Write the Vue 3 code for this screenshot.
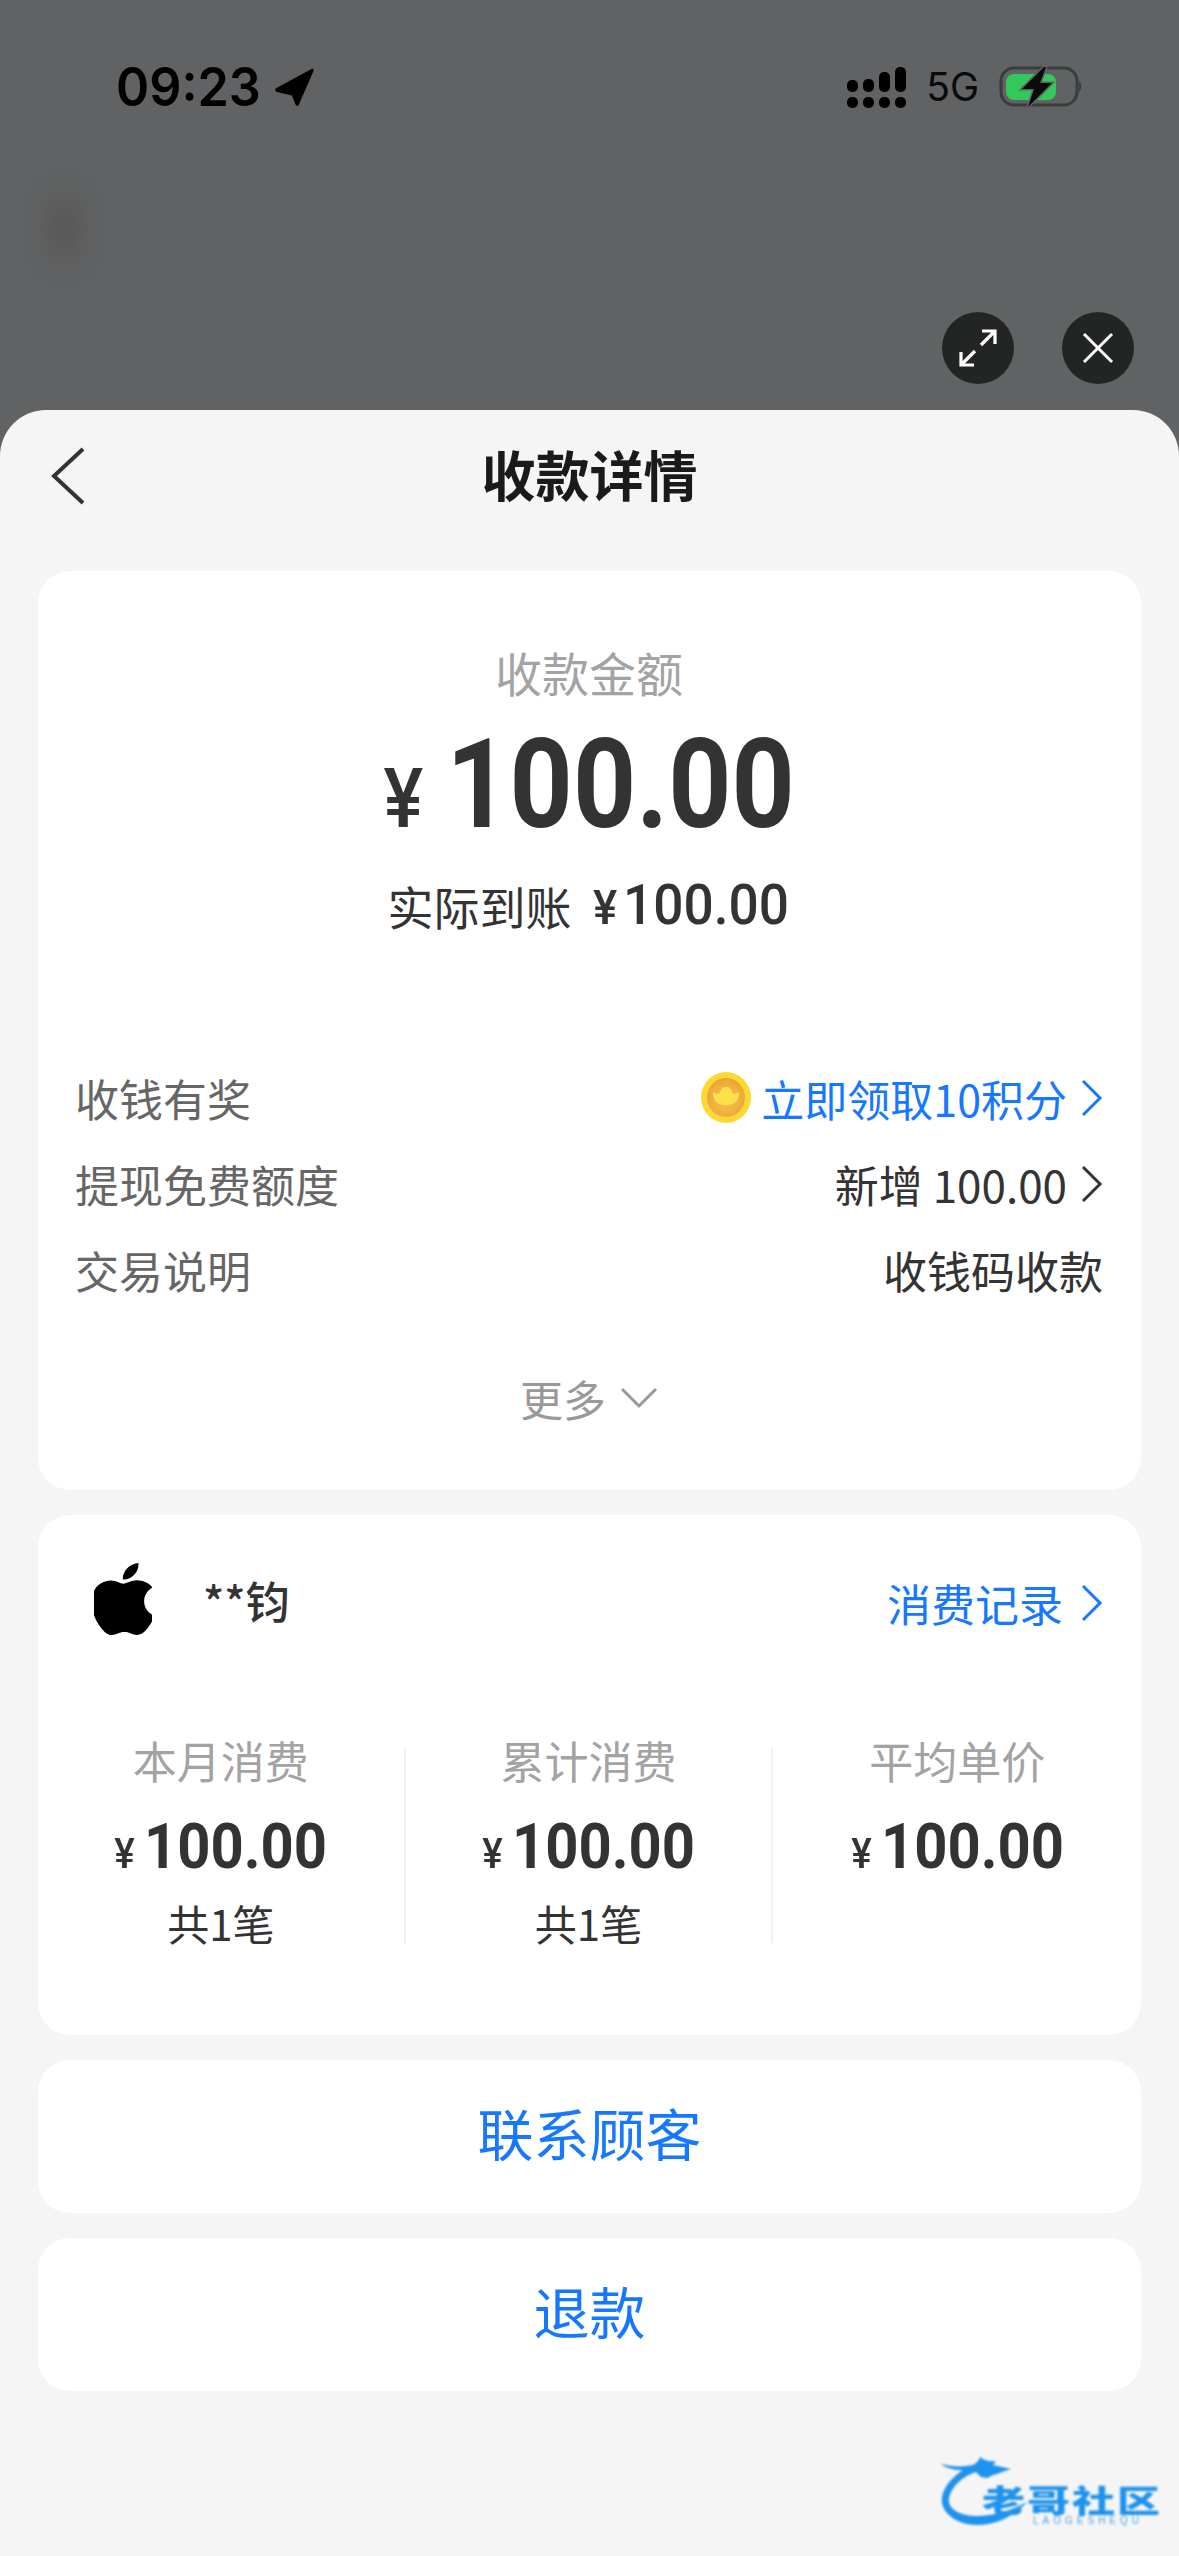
<template>
  <div class="page">
    <div class="blur-blob"></div>

    <div class="status-bar">
      <div class="status-left">
        <span class="clock">09:23</span>
        <svg class="loc-icon" viewBox="0 0 40 38">
          <path d="M36.500 1 1.500 20c-2 1.200-1.500 3.500.5 4l15 3.500 3.500 9c.8 2 3 1.800 3.500-.2L38.500 3c.5-1.700-.6-2.800-2-2z" fill="#000" />
        </svg>
      </div>
      <div class="status-right">
        <div class="signal">
          <div v-for="bar in signalBars" :key="bar" class="signal-col">
            <i class="signal-top" :style="{ height: bar + 'px' }"></i>
            <i class="signal-dot"></i>
          </div>
        </div>
        <span class="net">5G</span>
        <svg class="battery" width="83" height="42" viewBox="0 0 83 42">
          <rect x="2" y="2" width="76" height="37" rx="13" fill="none" stroke="#3b3c3d" stroke-width="3" />
          <rect x="7" y="8" width="50" height="26" rx="8" fill="#34c759" />
          <path d="M80 15c3 2 3 9 0 11z" fill="#3b3c3d" />
          <path d="M45 1 23 23h12l-6 18 24-24H41l6-16z" fill="#0b0b0b" stroke="#616263" stroke-width="3" paint-order="stroke" />
        </svg>
      </div>
    </div>

    <div class="top-actions">
      <button class="round-btn">
        <svg width="40" height="40" viewBox="0 0 40 40" fill="none" stroke="#fff" stroke-width="3.200">
          <path d="M24 3h13v13M37 3 23 17M16 37H3V24M3 37l14-14" />
        </svg>
      </button>
      <button class="round-btn">
        <svg width="34" height="34" viewBox="0 0 34 34" fill="none" stroke="#fff" stroke-width="3">
          <path d="M3 3l28 28M31 3 3 31" />
        </svg>
      </button>
    </div>

    <div class="sheet">
      <div class="sheet-head">
        <svg class="back" width="36" height="58" viewBox="0 0 36 58" fill="none" stroke="#333" stroke-width="4">
          <path d="M33 2 4 29l29 27" />
        </svg>
        <h1 class="title">收款详情</h1>
      </div>

      <section class="card detail-card">
        <div class="hero">
          <div class="hero-label">收款金额</div>
          <div class="hero-amount"><span class="hero-yen">¥</span>100.00</div>
          <div class="hero-actual">
            <span>实际到账</span>
            <span class="actual-num"><span class="actual-yen">¥</span>100.00</span>
          </div>
        </div>

        <div class="rows">
          <div class="row">
            <span class="row-key">收钱有奖</span>
            <span class="row-val blue">
              <svg class="coin" width="50" height="51" viewBox="0 0 50 51">
                <defs>
                  <radialGradient id="coinInner" cx="50%" cy="55%" r="55%">
                    <stop offset="0%" stop-color="#f7c75a" />
                    <stop offset="100%" stop-color="#eba52f" />
                  </radialGradient>
                </defs>
                <ellipse cx="25" cy="25.500" rx="25" ry="25.500" fill="#fdd835" />
                <ellipse cx="25" cy="25.500" rx="19" ry="19.500" fill="url(#coinInner)" />
                <path d="M12 20c3 2 5 2 7 1 .5-4 3-6 6-6s5.500 2 6 6c2 1 4 1 7-1 .5 7-3 13-13 13S11.500 27 12 20z" fill="#fbe04a" />
              </svg>
              <span>立即领取10积分</span>
              <svg class="chev" width="22" height="38" viewBox="0 0 22 38" fill="none" stroke="currentColor" stroke-width="3">
                <path d="M2 2l17 17L2 36" />
              </svg>
            </span>
          </div>
          <div class="row">
            <span class="row-key">提现免费额度</span>
            <span class="row-val">
              <span>新增 100.00</span>
              <svg class="chev" width="22" height="38" viewBox="0 0 22 38" fill="none" stroke="currentColor" stroke-width="3">
                <path d="M2 2l17 17L2 36" />
              </svg>
            </span>
          </div>
          <div class="row">
            <span class="row-key">交易说明</span>
            <span class="row-val">收钱码收款</span>
          </div>
        </div>

        <div class="more">
          <span>更多</span>
          <svg width="38" height="22" viewBox="0 0 38 22" fill="none" stroke="#999" stroke-width="3">
            <path d="M2 2l17 17L36 2" />
          </svg>
        </div>
      </section>

      <section class="card customer-card">
        <div class="customer-head">
          <svg class="apple" width="58" height="72" viewBox="3 0 18 24" preserveAspectRatio="none">
            <path d="M12.152 6.896c-.948 0-2.415-1.078-3.96-1.04-2.04.027-3.91 1.183-4.961 3.014-2.117 3.675-.546 9.103 1.519 12.09 1.013 1.454 2.208 3.09 3.792 3.039 1.52-.065 2.09-.987 3.935-.987 1.831 0 2.35.987 3.96.948 1.637-.026 2.676-1.48 3.676-2.948 1.156-1.688 1.636-3.325 1.662-3.415-.039-.013-3.182-1.221-3.22-4.857-.026-3.04 2.48-4.494 2.597-4.559-1.429-2.09-3.623-2.324-4.39-2.376-2-.156-3.675 1.09-4.61 1.09zM15.530 3.830c.843-1.012 1.400-2.427 1.245-3.830-1.207.052-2.662.805-3.532 1.818-.78.896-1.454 2.338-1.273 3.714 1.338.104 2.715-.688 3.559-1.701" fill="#000" />
          </svg>
          <span class="customer-name">**钧</span>
          <span class="record blue">
            <span>消费记录</span>
            <svg class="chev" width="22" height="38" viewBox="0 0 22 38" fill="none" stroke="currentColor" stroke-width="3">
              <path d="M2 2l17 17L2 36" />
            </svg>
          </span>
        </div>

        <div class="stats">
          <div v-for="s in stats" :key="s.label" class="stat">
            <div class="stat-label">{{ s.label }}</div>
            <div class="stat-num"><span class="stat-yen">¥</span>{{ s.value }}</div>
            <div class="stat-count">{{ s.count }}</div>
          </div>
        </div>
      </section>

      <button class="card action">联系顾客</button>
      <button class="card action">退款</button>

      <div class="watermark">
        <svg class="wm-dragon" width="110" height="76" viewBox="0 0 110 76">
          <path d="M1 11c12 3 22 3 32 1 4-2 6-5 7-8 5 4 10 5 16 4l-3 4 18 4c-8 3-16 5-24 9l-6-1-5-5C20 24 8 38 9 49c2 15 38 22 78 0-16 18-40 26-60 22C9 67-2 54 3 40c3-9 11-17 20-23C14 17 6 15 1 11z" fill="#1d92ee" />
        </svg>
        <div class="wm-text">
          <div class="wm-cn">老哥社区</div>
          <div class="wm-en">LAOGESHEQU</div>
        </div>
      </div>
    </div>
  </div>
</template>

<script setup>
const signalBars = [12, 13, 20, 25]

const stats = [
  { label: '本月消费', value: '100.00', count: '共1笔' },
  { label: '累计消费', value: '100.00', count: '共1笔' },
  { label: '平均单价', value: '100.00', count: '' }
]
</script>

<style>
html,
body {
  margin: 0;
  background: #616263;
}
</style>

<style scoped>
.page {
  position: relative;
  width: 1179px;
  height: 2556px;
  display: flex;
  flex-direction: column;
  overflow: hidden;
  background: #616263;
  font-family: "Noto Sans CJK SC", "Noto Sans", sans-serif;
  color: #333;
}

.blur-blob {
  position: absolute;
  left: 46px;
  top: 195px;
  width: 36px;
  height: 66px;
  border-radius: 50%;
  background: #585859;
  filter: blur(12px);
}

.status-bar {
  height: 174px;
  padding: 0 97px 0 116px;
  box-sizing: border-box;
  display: flex;
  justify-content: space-between;
  align-items: center;
}

.status-left {
  display: flex;
  align-items: center;
  gap: 14px;
}

.clock {
  margin-right: -8px;
  font-family: Inter, sans-serif;
  font-size: 53px;
  font-weight: 600;
  line-height: 60px;
  color: #000;
  transform: scaleX(0.95);
  transform-origin: left center;
}

.loc-icon {
  width: 40px;
  height: 38px;
}

.status-right {
  display: flex;
  align-items: center;
  gap: 20px;
}

.signal {
  display: flex;
  align-items: flex-end;
  gap: 5px;
}

.signal-col {
  display: flex;
  flex-direction: column;
  gap: 5px;
}

.signal-col i {
  display: block;
  width: 11px;
  border-radius: 5px;
  background: #000;
}

.signal-dot {
  height: 11px;
}

.net {
  font-family: Inter, sans-serif;
  font-size: 39px;
  font-weight: 400;
  line-height: 46px;
  color: #0a0a0a;
}

.top-actions {
  height: 236px;
  padding: 138px 45px 0 0;
  box-sizing: border-box;
  display: flex;
  justify-content: flex-end;
  gap: 48px;
}

.round-btn {
  width: 72px;
  height: 72px;
  border: 0;
  padding: 0;
  border-radius: 50%;
  background: #232525;
  display: flex;
  align-items: center;
  justify-content: center;
}

.sheet {
  flex: 1;
  position: relative;
  background: #f5f5f5;
  border-radius: 46px 46px 0 0;
  padding: 0 38px;
  display: flex;
  flex-direction: column;
}

.sheet-head {
  height: 161px;
  margin: 0 -38px;
  padding-bottom: 33px;
  box-sizing: border-box;
  position: relative;
  display: flex;
  align-items: center;
  justify-content: center;
}

.back {
  position: absolute;
  left: 50px;
  top: 37px;
}

.title {
  margin: 0;
  font-size: 54px;
  font-weight: 700;
  line-height: 70px;
  color: #1a1a1a;
}

.card {
  background: #fff;
  border-radius: 32px;
  box-sizing: border-box;
}

.detail-card {
  height: 919px;
  padding: 0 38px 0 37px;
  display: flex;
  flex-direction: column;
}

.hero {
  height: 496px;
  padding-top: 71px;
  box-sizing: border-box;
  display: flex;
  flex-direction: column;
  align-items: center;
}

.hero-label {
  font-size: 47px;
  line-height: 60px;
  color: #a3a3a3;
}

.hero-amount {
  margin-top: 23px;
  font-family: Roboto, sans-serif;
  font-size: 124px;
  font-weight: 700;
  line-height: 120px;
  color: #333;
  transform: scaleX(0.89);
}

.hero-yen {
  font-size: 84px;
  font-weight: 500;
  margin-right: 26px;
}

.hero-actual {
  margin-top: 15px;
  height: 62px;
  display: flex;
  align-items: center;
  gap: 22px;
  font-size: 46px;
  color: #333;
}

.actual-num {
  display: inline-block;
  margin-right: -9px;
  font-family: Roboto, sans-serif;
  font-size: 56px;
  font-weight: 500;
  transform: scaleX(0.95);
  transform-origin: left center;
}

.actual-yen {
  font-size: 48px;
  margin-right: 6px;
}

.rows {
  display: flex;
  flex-direction: column;
  gap: 25px;
}

.row {
  height: 61px;
  display: flex;
  justify-content: space-between;
  align-items: center;
  font-size: 44px;
}

.row-key {
  color: #666;
}

.row-val {
  display: flex;
  align-items: center;
  gap: 14px;
  color: #333;
}

.blue {
  color: #1677ff;
  font-size: 43px;
}

.coin {
  margin-right: -4px;
}

.more {
  margin-top: 67px;
  height: 62px;
  display: flex;
  justify-content: center;
  align-items: center;
  gap: 14px;
  font-size: 43px;
  color: #999;
}

.customer-card {
  height: 520px;
  margin-top: 25px;
  padding: 0 38px;
}

.customer-head {
  height: 175px;
  display: flex;
  align-items: center;
}

.apple {
  margin-left: 18px;
  margin-top: -8px;
}

.customer-name {
  margin-left: 51px;
  margin-top: -6px;
  font-size: 44px;
  font-weight: 500;
  color: #333;
}

.record {
  margin-left: auto;
  display: flex;
  align-items: center;
  gap: 18px;
  font-size: 44px;
}

.stats {
  margin: 58px -38px 0;
  display: grid;
  grid-template-columns: repeat(3, 1fr);
}

.stat {
  height: 195px;
  display: flex;
  flex-direction: column;
  align-items: center;
  border-right: 2px solid #f0f0f0;
}

.stat:last-child {
  border-right: 0;
}

.stat-label {
  font-size: 44px;
  line-height: 60px;
  margin-top: -18px;
  color: #a3a3a3;
}

.stat-num {
  margin-top: 22px;
  font-family: Roboto, sans-serif;
  font-size: 63px;
  font-weight: 700;
  line-height: 70px;
  color: #333;
  transform: scaleX(0.92);
}

.stat-yen {
  font-size: 42px;
  font-weight: 500;
  margin-right: 10px;
}

.stat-count {
  margin-top: 4px;
  font-size: 42px;
  line-height: 60px;
  color: #333;
}

.action {
  flex: none;
  border: 0;
  margin-top: 25px;
  height: 153px;
  padding: 0 0 10px;
  font-family: inherit;
  font-size: 56px;
  color: #1677ff;
}

.watermark {
  position: absolute;
  left: 940px;
  top: 2043px;
  display: flex;
  filter: blur(0.8px);
}

.wm-dragon {
  display: block;
}

.wm-text {
  margin-left: -68px;
  margin-top: 30px;
}

.wm-cn {
  width: 180px;
  font-size: 43px;
  font-weight: 900;
  line-height: 30px;
  letter-spacing: 2px;
  color: #1d92ee;
  white-space: nowrap;
  transform: scaleY(0.72);
}

.wm-en {
  margin: 3px 0 0 51px;
  font-family: "Liberation Sans", sans-serif;
  font-size: 10px;
  line-height: 10px;
  letter-spacing: 4px;
  color: #4fa6e8;
}
</style>
